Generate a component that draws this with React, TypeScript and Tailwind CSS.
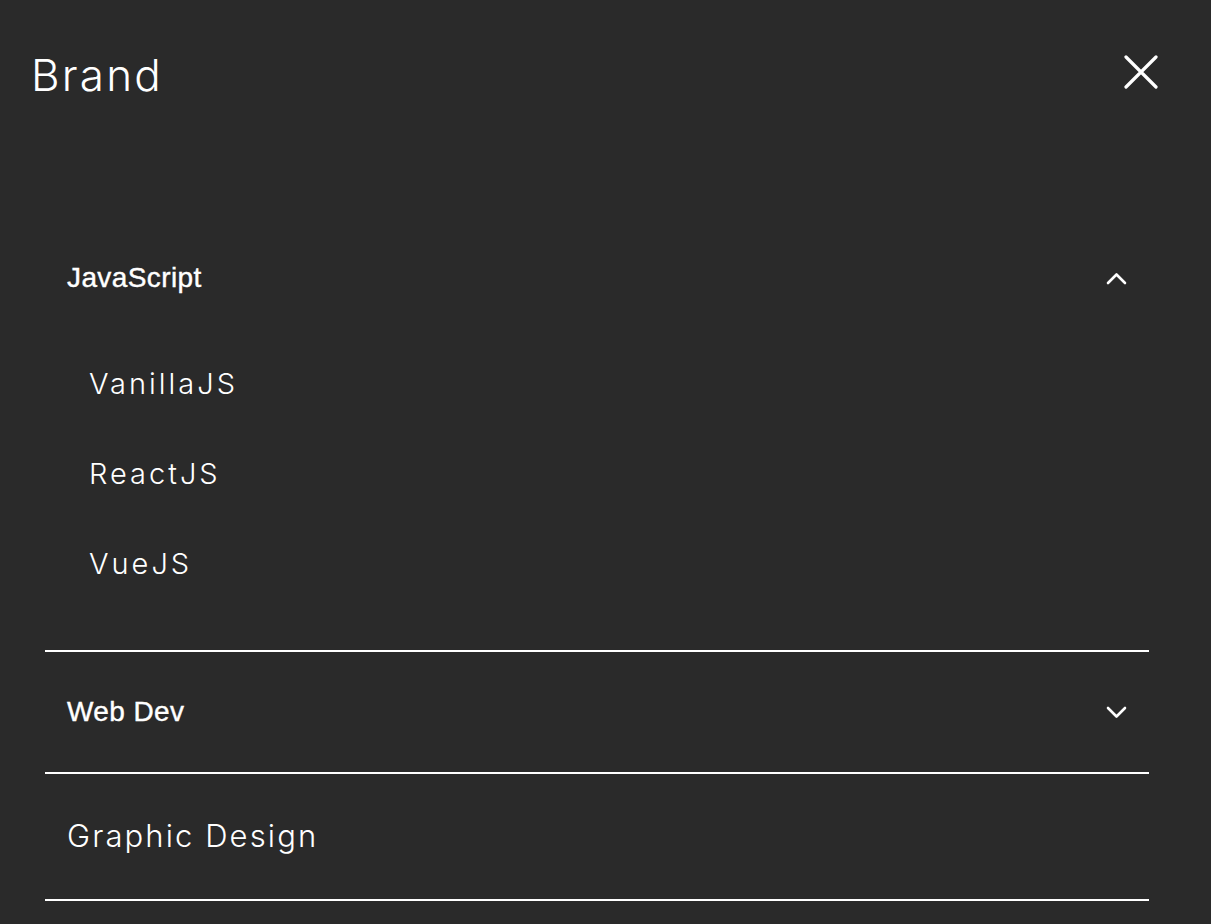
import React, { useState } from 'react';

const inter = { fontFamily: 'Inter, "Noto Sans", sans-serif' };
const arial = { fontFamily: '"Liberation Sans", Arial, sans-serif' };

function Chevron({ up }: { up: boolean }) {
  return (
    <svg width="22" height="14" viewBox="0 0 22 14" fill="none" stroke="white" strokeWidth="2.6" strokeLinecap="round" strokeLinejoin="round">
      {up ? <path d="M3 12 L11.5 3.5 L20 12" /> : <path d="M3 3 L11.5 11.5 L20 3" />}
    </svg>
  );
}

export default function App() {
  const [open, setOpen] = useState<string | null>('JavaScript');
  const subItems = ['VanillaJS', 'ReactJS', 'VueJS'];

  return (
    <div className="min-h-screen w-full bg-[#2a2a2a] text-white" style={inter}>
      <header className="flex items-center justify-between pl-[31px] pr-[53px] pt-[48px]">
        <h1 className="text-[44px] font-light leading-[54px] tracking-[2.2px]">Brand</h1>
        <button className="mt-[-6px]">
          <svg width="34" height="34" viewBox="0 0 34 34" stroke="white" strokeWidth="3.2" strokeLinecap="round">
            <path d="M2 2 L32 32 M32 2 L2 32" />
          </svg>
        </button>
      </header>

      <nav className="ml-[45px] mr-[62px] mt-[115px]">
        <div className="border-b-2 border-white">
          <button
            onClick={() => setOpen(open === 'JavaScript' ? null : 'JavaScript')}
            className="flex h-[122px] w-full items-center justify-between px-[22px]"
          >
            <span className="text-[28px] leading-none tracking-[0.4px] [-webkit-text-stroke:0.4px_white]" style={arial}>
              JavaScript
            </span>
            <Chevron up={open === 'JavaScript'} />
          </button>
          {open === 'JavaScript' && (
            <ul className="pb-[41px] pl-[44px]">
              {subItems.map((s) => (
                <li key={s} className="flex h-[90px] items-center text-[29px] font-light tracking-[3px]">
                  {s}
                </li>
              ))}
            </ul>
          )}
        </div>
        <div className="border-b-2 border-white">
          <button
            onClick={() => setOpen(open === 'Web Dev' ? null : 'Web Dev')}
            className="flex h-[120px] w-full items-center justify-between px-[22px]"
          >
            <span className="text-[28px] leading-none tracking-[0.4px] [-webkit-text-stroke:0.4px_white]" style={arial}>
              Web Dev
            </span>
            <Chevron up={open === 'Web Dev'} />
          </button>
        </div>
        <div className="border-b-2 border-white">
          <a href="#" className="flex h-[125px] items-center px-[22px] text-[31px] font-light tracking-[2.1px]">
            Graphic Design
          </a>
        </div>
      </nav>
    </div>
  );
}
